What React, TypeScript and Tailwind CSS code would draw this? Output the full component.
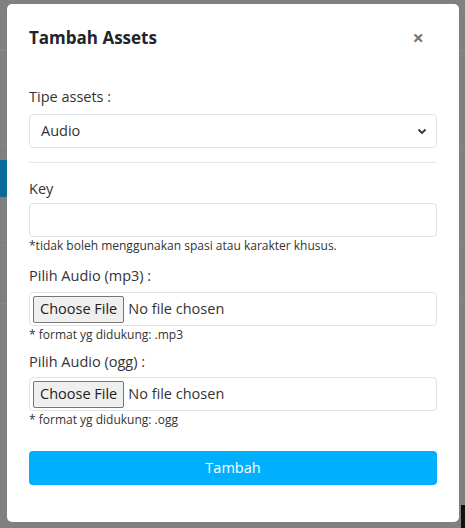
import React from "react";

const font = { fontFamily: '"Open Sans", "Noto Sans", sans-serif' };

function FileField() {
  return (
    <div className="flex h-[34px] items-center rounded-[4px] border border-[#dfe3e8] bg-white pl-[3px]">
      <div className="flex h-[27px] items-center rounded-[2px] border border-[#767676] bg-[#efefef] px-[6px] text-[14.5px] text-[#222]">
        Choose File
      </div>
      <span className="ml-[4px] text-[14.5px] text-[#333]">No file chosen</span>
    </div>
  );
}

export default function App() {
  return (
    <div className="relative h-[528px] w-[465px] overflow-hidden bg-[#808080]" style={font}>
      {/* faint background page remnants */}
      <div className="absolute left-0 top-[50px] h-px w-[465px] bg-[#8a8a8a]" />
      <div className="absolute left-0 top-[145px] h-px w-[465px] bg-[#868686]" />
      <div className="absolute left-0 top-[160px] h-[37px] w-[7px] bg-[#0a6a9a]" />
      <div className="absolute left-0 top-[245px] h-px w-[465px] bg-[#868686]" />
      <div className="absolute left-0 top-[303px] h-px w-[465px] bg-[#868686]" />
      <div className="absolute right-0 top-[505px] h-[23px] w-[4px] bg-[#111]" />

      <div className="absolute left-[7px] top-[4px] flex h-[518px] w-[452px] flex-col rounded-[5px] bg-white px-[22px]">
        <div className="flex h-[68px] items-center justify-between">
          <h2 className="text-[17px] font-bold text-[#212529]">Tambah Assets</h2>
          <span className="mr-[13px] text-[20px] font-bold leading-none text-[#777]">×</span>
        </div>

        <div className="mt-[15px] text-[14.5px] leading-[20px] text-[#333]">Tipe assets :</div>
        <div className="mt-[7px] flex h-[34px] items-center justify-between rounded-[4px] border border-[#dfe3e8] px-[11px]">
          <span className="text-[14.5px] text-[#333]">Audio</span>
          <svg width="10" height="7" viewBox="0 0 10 7" className="mr-[-2px]">
            <path d="M1.5 1.5 L5 5 L8.5 1.5" fill="none" stroke="#333" strokeWidth="1.8" />
          </svg>
        </div>
        <div className="mt-[14px] h-px bg-[#e5e7ea]" />

        <div className="mt-[16px] text-[14.5px] leading-[20px] text-[#333]">Key</div>
        <div className="mt-[4px] h-[34px] rounded-[4px] border border-[#dfe3e8]" />
        <div className="mt-[1px] text-[12px] leading-[16px] text-[#333]">*tidak boleh menggunakan spasi atau karakter khusus.</div>

        <div className="mt-[12px] text-[14.5px] leading-[20px] text-[#333]">Pilih Audio (mp3) :</div>
        <div className="mt-[6px]">
          <FileField />
        </div>
        <div className="mt-[1px] text-[12px] leading-[16px] text-[#333]">* format yg didukung: .mp3</div>

        <div className="mt-[9px] text-[14.5px] leading-[20px] text-[#333]">Pilih Audio (ogg) :</div>
        <div className="mt-[5px]">
          <FileField />
        </div>
        <div className="mt-[1px] text-[12px] leading-[16px] text-[#333]">* format yg didukung: .ogg</div>

        <button className="mt-[23px] flex h-[34px] items-center justify-center rounded-[4px] bg-[#00b0ff] text-[14.5px] text-white">
          Tambah
        </button>
      </div>
    </div>
  );
}
